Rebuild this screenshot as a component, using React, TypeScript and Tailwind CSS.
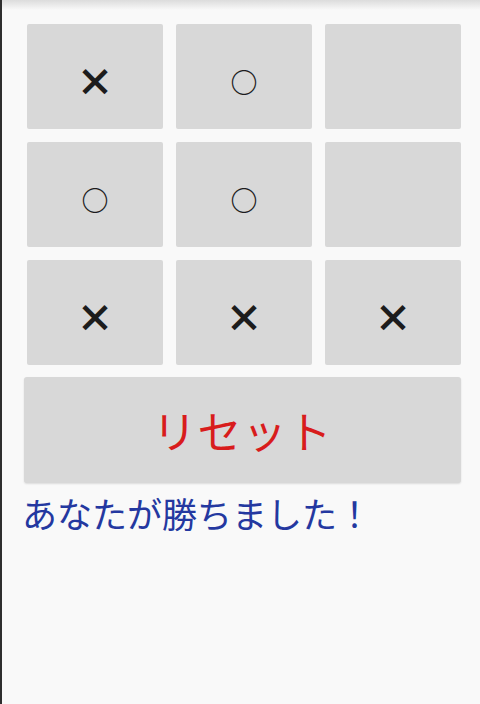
import React from 'react';

const board = ['×', '○', '', '○', '○', '', '×', '×', '×'];

export default function App() {
  return (
    <div className="relative w-[480px] h-[704px] bg-[#f9f9f9] border-l-2 border-[#2e2e2e] overflow-hidden font-['Noto_Sans_CJK_JP',sans-serif]">
      <div className="absolute top-0 left-0 right-0 h-[10px] bg-gradient-to-b from-[#dcdcdc] to-[#f9f9f9]" />
      <div className="pt-[24px] pl-[25px]">
        <div className="grid grid-cols-[136px_136px_136px] auto-rows-[105px] gap-x-[13px] gap-y-[13px]">
          {board.map((mark, i) => (
            <div
              key={i}
              className={`flex items-center justify-center bg-[#d8d8d8] rounded-[2px] text-[#1c1c1c] leading-none ${
                mark === '×' ? 'text-[38px] font-black pt-[6px]' : 'text-[27px] font-bold pt-[9px]'
              }`}
            >
              {mark}
            </div>
          ))}
        </div>
        <div className="-ml-[3px] mt-[12px] w-[437px] h-[106px] bg-[#d8d8d8] rounded-[3px] shadow-[0_1px_2px_rgba(0,0,0,0.12)] flex items-center justify-center text-[#d81c1c] text-[44px] leading-none tracking-[1px]">
          リセット
        </div>
        <div className="-ml-[5px] mt-[12px] text-[#2438a0] text-[35px] leading-none">
          あなたが勝ちました！
        </div>
      </div>
    </div>
  );
}
